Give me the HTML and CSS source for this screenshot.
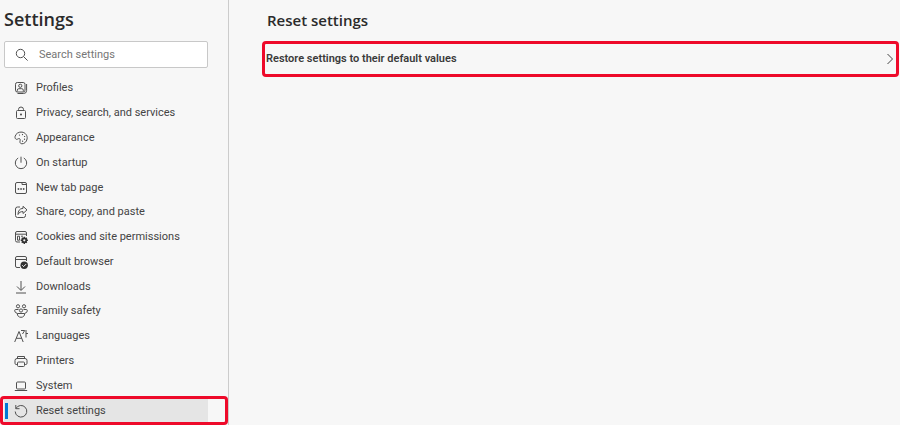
FILE: index.html
```
<!DOCTYPE html>
<html lang="en">
<head>
    <meta charset="UTF-8">
    <meta name="viewport" content="width=device-width, initial-scale=1.0">
    <title>Settings</title>
    <link rel="stylesheet" href="styles.css">
</head>
<body>
    <aside class="sidebar">
        <h1>Settings</h1>
        <label class="search">
            <svg class="icon" viewBox="0 0 14 14"><circle cx="5.5" cy="5.5" r="4.2"/><path d="M8.6 8.6l4 4"/></svg>
            <input type="search" placeholder="Search settings" aria-label="Search settings">
        </label>
        <nav>
            <ul class="menu">
                <li><a href="#profiles">
                    <svg class="icon" viewBox="0 0 14 14"><rect x="1.5" y="1.5" width="9.5" height="9.5" rx="1.8"/><circle cx="6.3" cy="4.8" r="1.6"/><path d="M3.3 10.5V9.2q0-1.5 1.5-1.5h3q1.5 0 1.5 1.5v1.3M12.6 3v6.5q0 3-3 3H3.5"/></svg>
                    Profiles</a></li>
                <li><a href="#privacy">
                    <svg class="icon" viewBox="0 0 14 14"><rect x="2.5" y="4.5" width="9" height="8" rx="1"/><path d="M4.5 4.5v-1a2.5 2.5 0 0 1 5 0v1"/><circle class="solid" cx="7" cy="8.5" r=".9"/></svg>
                    Privacy, search, and services</a></li>
                <li><a href="#appearance">
                    <svg class="icon" viewBox="0 0 14 14"><path d="M1 5.8C1.6 2.3 5 .7 8 1.1c3.5.5 5.6 3.5 5.1 6.8-.5 3-3 5.1-5.3 4.9-1.9-.2-2.1-1.7-1.7-3 .4-1.5-.2-2.5-1.4-2.2-1 .3-1.5 1-2.4.7C1.4 8 .9 7 1 5.8z"/><circle class="solid" cx="5.5" cy="4" r=".6"/><circle class="solid" cx="8.5" cy="3.6" r=".6"/><circle class="solid" cx="10.6" cy="5.5" r=".6"/><circle class="solid" cx="10.5" cy="8.2" r=".6"/><circle class="solid" cx="8.6" cy="10.2" r=".6"/></svg>
                    Appearance</a></li>
                <li><a href="#startup">
                    <svg class="icon" viewBox="0 0 14 14"><path d="M7 .7v6M4.2 2a5.700 5.700 0 1 0 5.600 0"/></svg>
                    On startup</a></li>
                <li><a href="#newtab">
                    <svg class="icon" viewBox="0 0 14 14"><rect x="1.5" y="1.5" width="11" height="11" rx="1.5"/><path d="M8 1.5v2h4.5"/><path class="bold" d="M3.7 8h1.5M6.3 8h1.5M8.9 8h1.5"/></svg>
                    New tab page</a></li>
                <li><a href="#share">
                    <svg class="icon" viewBox="0 0 14 14"><path d="M6 2H3.5Q1.5 2 1.5 4v6.5q0 2 2 2h6q2 0 2-2V9"/><path d="M9 1.3l4 3.6-4 3.6V6.6C6.5 6.5 5 7.5 4 9.5 4 6 5.5 3.500 9 3.300z"/></svg>
                    Share, copy, and paste</a></li>
                <li><a href="#cookies">
                    <svg class="icon" viewBox="0 0 14 14"><path d="M6 12H3q-1.5 0-1.5-1.5V3Q1.5 1.5 3 1.5h8q1.5 0 1.5 1.5v3M1.5 4.2h11M3.5 6.2h2v4h-2zM7 6.2h2"/><circle class="solid" cx="10.3" cy="10.3" r="2.8"/><path class="bold" d="M10.3 6.700v7.200M6.700 10.300h7.200M7.800 7.800l5 5M12.800 7.800l-5 5"/><circle class="hole" cx="10.3" cy="10.3" r="1.1"/></svg>
                    Cookies and site permissions</a></li>
                <li><a href="#browser">
                    <svg class="icon" viewBox="0 0 14 14"><path d="M6 12.5H3q-1.5 0-1.5-1.5V3Q1.5 1.5 3 1.5h8q1.5 0 1.5 1.5v3M1.5 4.5h11"/><circle class="solid" cx="10.2" cy="10.2" r="3.7"/><path class="tick" d="M8.3 10.300l1.300 1.300 2.500-2.500"/></svg>
                    Default browser</a></li>
                <li><a href="#downloads">
                    <svg class="icon" viewBox="0 0 14 14"><path d="M7 1v9M3 6.500l4 4 4-4M2 13h10"/></svg>
                    Downloads</a></li>
                <li><a href="#family">
                    <svg class="icon" viewBox="0 0 14 14"><circle cx="4" cy="2.3" r="1.6"/><circle cx="10" cy="2.3" r="1.6"/><circle cx="7" cy="6.5" r="1.6"/><path d="M4.5 5.500H1.700Q.6 5.500.7 6.800.9 9 3.200 9.300M9.500 5.500h2.800q1.100 0 1 1.300-.2 2.200-2.500 2.500M3.300 9.500h7.400c0 2.400-1.500 3.800-3.700 3.800S3.300 11.900 3.300 9.500z"/></svg>
                    Family safety</a></li>
                <li><a href="#languages">
                    <svg class="icon" viewBox="0 0 14 14"><path d="M.7 13L5 2.500 9.200 13M2.200 9.300h5.600M7 1.500h3.700L8.500 5M12 1v7.500M12 4.500h2"/></svg>
                    Languages</a></li>
                <li><a href="#printers">
                    <svg class="icon" viewBox="0 0 14 14"><path d="M3.5 4.500v-2h7v2M3.500 10.500H2.200Q1 10.500 1 9.300V6.500q0-2 2-2h8q2 0 2 2v2.800q0 1.200-1.200 1.200h-1.300"/><rect x="3.5" y="8" width="7" height="4.5" rx="1"/></svg>
                    Printers</a></li>
                <li><a href="#system">
                    <svg class="icon" viewBox="0 0 14 14"><rect x="2.5" y="3" width="9" height="7" rx="1"/><path d="M.8 11.500h12.400"/></svg>
                    System</a></li>
                <li class="marked"><a href="#reset" class="active" aria-current="page">
                    <svg class="icon" viewBox="0 0 14 14"><path d="M1.8 1v3.700h3.700M1.900 4.500A5.800 5.800 0 1 1 1.200 7.500"/></svg>
                    Reset settings</a></li>
            </ul>
        </nav>
    </aside>
    <main>
        <h2>Reset settings</h2>
        <button type="button" class="restore">
            Restore settings to their default values
            <svg class="chevron" viewBox="0 0 8 12"><path d="M1.500 1l5 5-5 5"/></svg>
        </button>
    </main>
</body>
</html>
```
FILE: styles.css
```
* { box-sizing: border-box; }
body { margin: 0; min-height: 100vh; display: flex; background: #f7f7f7; color: #444; font: 11px/16px Roboto, "Noto Sans", sans-serif; }
h1, h2 { margin: 0; color: #2b2b2b; font-family: "Open Sans", "Noto Sans", sans-serif; font-weight: 600; }

/* sidebar */
.sidebar { width: 229px; flex-shrink: 0; display: flex; flex-direction: column; border-right: 1px solid #ccc; padding-bottom: 2px; }
h1 { font-size: 18px; line-height: 24px; padding: 7px 4px 10px; }
.search { display: flex; align-items: center; height: 27px; margin: 0 20px 8px 4px; padding-left: 10px; gap: 10px; background: #fff; border: 1px solid #c8c8c8; border-radius: 2px; }
.search input { flex: 1; min-width: 0; border: 0; padding: 0; outline: none; background: none; font: inherit; }
.search input::placeholder { color: #767676; opacity: 1; }
.sidebar nav { flex: 1; display: flex; }
.menu { flex: 1; display: grid; grid-auto-rows: 1fr; margin: 0; padding: 0; list-style: none; }
.menu li { display: flex; padding: 0 20px 0 4px; }
.menu a { flex: 1; display: flex; align-items: center; gap: 8px; padding-left: 10px; color: inherit; text-decoration: none; }
.menu .active { background: linear-gradient(#0078d4, #0078d4) 1px 50% / 3px 16px no-repeat #e5e5e5; }

/* red frame around the highlighted entry */
.marked { position: relative; }
.marked::after { content: ""; position: absolute; inset: -2px 0; border: 3px solid #ee0a2a; border-radius: 4px; pointer-events: none; }

/* icons */
.icon { width: 14px; height: 14px; flex-shrink: 0; overflow: visible; fill: none; stroke: #505050; stroke-width: 1; }
.icon .solid { fill: #333; stroke: none; }
.icon .bold { stroke: #333; stroke-width: 1.5; }
.icon .hole { fill: #f7f7f7; stroke: none; }
.icon .tick { stroke: #fff; }

/* content */
main { flex: 1; padding: 9px 1px 0 33px; }
h2 { font-size: 15px; line-height: 22px; padding: 0 5px 10px; }
.restore { display: flex; align-items: center; justify-content: space-between; width: 100%; height: 36px; padding: 0 2px 0 1px; background: none; border: 3px solid #ee0a2a; border-radius: 4px; color: #3a3a3a; font: 600 11px/16px Roboto, "Noto Sans", sans-serif; cursor: pointer; }
.chevron { width: 8px; height: 12px; fill: none; stroke: #444; stroke-width: 1; }
```
